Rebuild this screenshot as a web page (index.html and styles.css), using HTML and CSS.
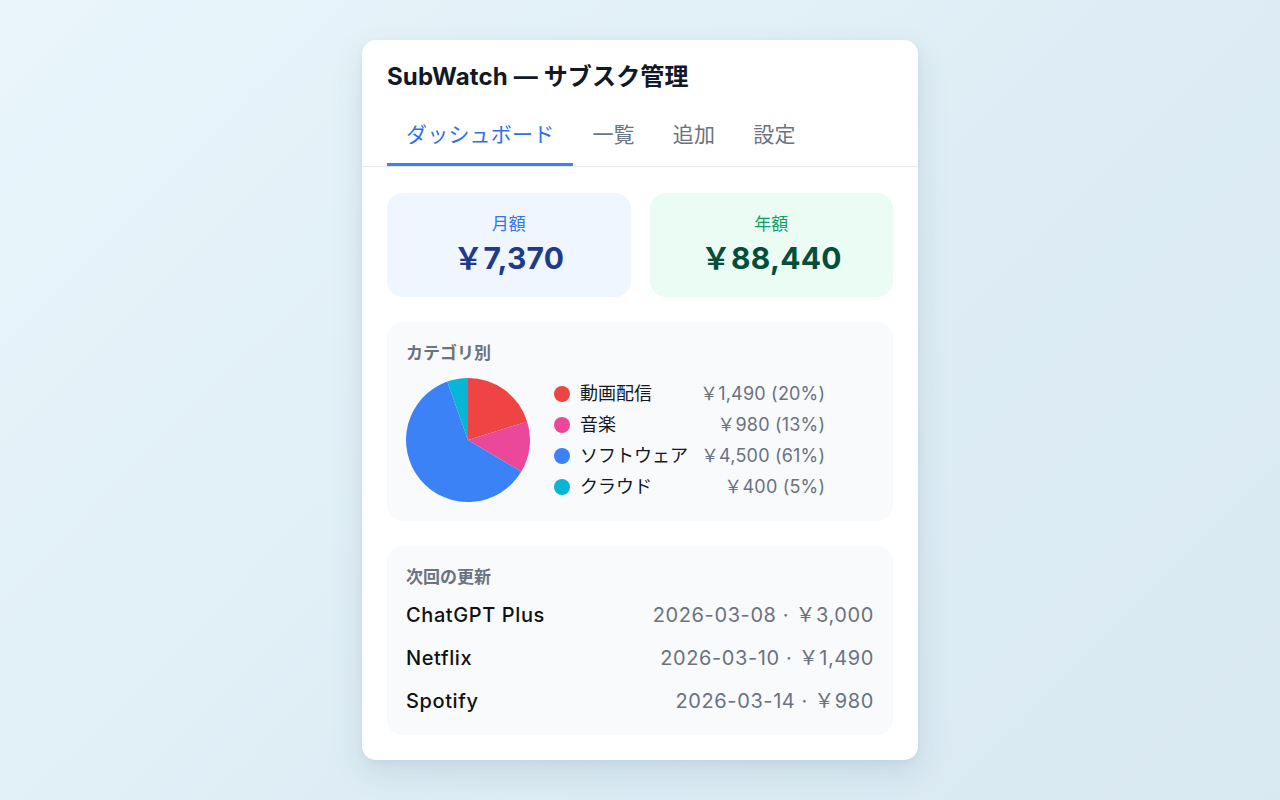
FILE: index.html
```html
<!DOCTYPE html>
<html lang="ja">
<head>
<meta charset="utf-8">
<title>SubWatch — サブスク管理</title>
<link rel="stylesheet" href="styles.css">
</head>
<body>
<div class="app">
  <h1 class="title">SubWatch — サブスク管理</h1>
  <nav class="tabs">
    <div class="tab active">ダッシュボード</div>
    <div class="tab">一覧</div>
    <div class="tab">追加</div>
    <div class="tab">設定</div>
  </nav>
  <main class="content">
    <div class="stats">
      <div class="stat stat-month">
        <div class="stat-label">月額</div>
        <div class="stat-value">￥7,370</div>
      </div>
      <div class="stat stat-year">
        <div class="stat-label">年額</div>
        <div class="stat-value">￥88,440</div>
      </div>
    </div>
    <section class="panel">
      <h2 class="panel-title">カテゴリ別</h2>
      <div class="cat-body">
        <svg class="pie" width="124" height="124" viewBox="0 0 124 124">
          <path d="M62 62 L62 0 A62 62 0 0 1 121.22 43.65 Z" fill="#ef4444"/>
          <path d="M62 62 L121.22 43.65 A62 62 0 0 1 115.34 93.61 Z" fill="#ec4899"/>
          <path d="M62 62 L115.34 93.61 A62 62 0 1 1 41.27 3.57 Z" fill="#3b82f6"/>
          <path d="M62 62 L41.27 3.57 A62 62 0 0 1 62 0 Z" fill="#06b6d4"/>
        </svg>
        <div class="legend">
          <span class="dot dot-red"></span><span class="lg-name">動画配信</span><span class="lg-amt">￥1,490 (20%)</span>
          <span class="dot dot-pink"></span><span class="lg-name">音楽</span><span class="lg-amt">￥980 (13%)</span>
          <span class="dot dot-blue"></span><span class="lg-name">ソフトウェア</span><span class="lg-amt">￥4,500 (61%)</span>
          <span class="dot dot-cyan"></span><span class="lg-name">クラウド</span><span class="lg-amt">￥400 (5%)</span>
        </div>
      </div>
    </section>
    <section class="panel panel-next">
      <h2 class="panel-title">次回の更新</h2>
      <ul class="renewals">
        <li class="renewal"><span class="r-name">ChatGPT Plus</span><span class="r-info">2026-03-08 · ￥3,000</span></li>
        <li class="renewal"><span class="r-name">Netflix</span><span class="r-info">2026-03-10 · ￥1,490</span></li>
        <li class="renewal"><span class="r-name">Spotify</span><span class="r-info">2026-03-14 · ￥980</span></li>
      </ul>
    </section>
  </main>
</div>
</body>
</html>
```

FILE: styles.css
```css
* { box-sizing: border-box; }
html, body { margin: 0; padding: 0; }
body {
  min-height: 100vh;
  display: flex;
  align-items: center;
  justify-content: center;
  background: linear-gradient(135deg, #e9f5fb 0%, #deedf5 55%, #d9e9f2 100%);
  font-family: "Inter", "Noto Sans CJK JP", "Noto Sans", sans-serif;
  color: #111827;
}
.app {
  width: 556px;
  height: 720px;
  background: #ffffff;
  border-radius: 14px;
  box-shadow: 0 12px 32px rgba(40, 80, 110, 0.13), 0 2px 6px rgba(40, 80, 110, 0.05);
  padding: 22px 25px 0;
}
.title {
  margin: 0;
  font-size: 24px;
  line-height: 30px;
  font-weight: 700;
  color: #111827;
  letter-spacing: 0.15px;
}
.tabs {
  display: flex;
  margin: 12px -25px 0;
  padding: 0 25px;
  border-bottom: 1px solid #e5e7eb;
}
.tab {
  font-size: 21px;
  line-height: 30px;
  padding: 16px 19px 13px;
  color: #6b7280;
  border-bottom: 3px solid transparent;
  letter-spacing: 0.2px;
}
.tab.active {
  color: #2f6fed;
  border-bottom-color: #3b82f6;
}
.content {
  padding-top: 26px;
  display: flex;
  flex-direction: column;
  gap: 25px;
}
.stats {
  display: grid;
  grid-template-columns: 1fr 1fr;
  gap: 19px;
}
.stat {
  height: 104px;
  border-radius: 16px;
  padding: 19px 12px 0;
  display: flex;
  flex-direction: column;
  align-items: center;
  gap: 4px;
}
.stat-label { font-size: 17px; line-height: 24px; }
.stat-value { font-size: 30px; line-height: 36px; font-weight: 700; letter-spacing: 0.2px; }
.stat-month { background: #eff6ff; }
.stat-month .stat-label { color: #2f73f0; }
.stat-month .stat-value { color: #1e3a8a; }
.stat-year { background: #eafcf3; }
.stat-year .stat-label { color: #0f9d63; }
.stat-year .stat-value { color: #064e3b; }
.panel {
  background: #f8fafc;
  border-radius: 16px;
  padding: 19px;
}
.panel-title {
  margin: 0;
  font-size: 17px;
  line-height: 24px;
  font-weight: 700;
  color: #6b7280;
}
.cat-body {
  display: flex;
  align-items: center;
  gap: 24px;
  margin-top: 13px;
}
.pie { display: block; flex: none; }
.legend {
  display: grid;
  grid-template-columns: 16px auto auto;
  column-gap: 10px;
  row-gap: 5px;
  align-items: center;
  font-size: 18px;
  line-height: 26px;
}
.dot { width: 16px; height: 16px; border-radius: 50%; }
.dot-red { background: #ef4444; }
.dot-pink { background: #ec4899; }
.dot-blue { background: #3b82f6; }
.dot-cyan { background: #06b6d4; }
.lg-name { color: #111827; }
.lg-amt { color: #6b7280; text-align: right; padding-left: 2px; letter-spacing: 0.2px; }
.renewals {
  list-style: none;
  margin: 11px 0 0;
  padding: 0;
  display: flex;
  flex-direction: column;
  gap: 13px;
}
.renewal {
  display: flex;
  justify-content: space-between;
  align-items: center;
  font-size: 20px;
  line-height: 30px;
  letter-spacing: 0.6px;
}
.r-name { color: #111111; font-weight: 500; }
.r-info { color: #6b7280; }
```
